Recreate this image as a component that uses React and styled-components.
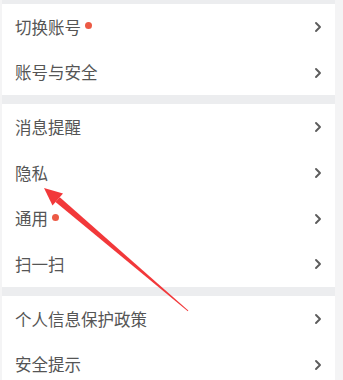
import styled, { createGlobalStyle } from 'styled-components';

const GlobalStyle = createGlobalStyle`
  html, body {
    margin: 0;
    padding: 0;
    background: #f4f4f5;
  }
  body {
    font-family: "Noto Sans CJK SC", "Noto Sans", sans-serif;
  }
`;

const Page = styled.div`
  position: relative;
  width: 343px;
  height: 380px;
  overflow: hidden;
`;

const List = styled.div`
  display: flex;
  flex-direction: column;
  gap: 9px;
  margin: 0 8px 0 2px;
  padding-top: 4px;
  background: #ecedef;
`;

const Card = styled.div`
  background: #ffffff;
  display: flex;
  flex-direction: column;
`;

const Row = styled.div`
  height: 45.7px;
  display: flex;
  align-items: center;
  padding: 0 13px 0 13px;
`;

const Label = styled.span`
  font-size: 16.5px;
  color: #555555;
  line-height: 1;
`;

const Dot = styled.span`
  width: 7px;
  height: 7px;
  border-radius: 50%;
  background: #ec5a45;
  margin-left: 4px;
  margin-top: -2px;
`;

const Spacer = styled.div`
  flex: 1;
`;

const Arrow = styled.svg`
  position: absolute;
  left: 0;
  top: 0;
  pointer-events: none;
`;

const Chevron = () => (
  <svg width="8" height="12" viewBox="0 0 8 12">
    <path d="M2 2 L6 6 L2 10" fill="none" stroke="#5c5c5c" strokeWidth="1.9" strokeLinecap="round" strokeLinejoin="round" />
  </svg>
);

const groups = [
  [{ label: '切换账号', dot: true }, { label: '账号与安全' }],
  [{ label: '消息提醒' }, { label: '隐私' }, { label: '通用', dot: true }, { label: '扫一扫' }],
  [{ label: '个人信息保护政策' }, { label: '安全提示' }],
];

export default function App() {
  return (
    <>
      <GlobalStyle />
      <Page>
        <List>
          {groups.map((items, i) => (
            <Card key={i}>
              {items.map((item) => (
                <Row key={item.label}>
                  <Label>{item.label}</Label>
                  {item.dot && <Dot />}
                  <Spacer />
                  <Chevron />
                </Row>
              ))}
            </Card>
          ))}
        </List>
        <Arrow width="343" height="380" viewBox="0 0 343 380">
          <polygon points="44,188 63,193.5 52.5,205.5" fill="#f2383a" />
          <polygon points="55.5,202 59.8,197.2 188.3,310.6 187.8,311.2" fill="#f2383a" />
        </Arrow>
      </Page>
    </>
  );
}
